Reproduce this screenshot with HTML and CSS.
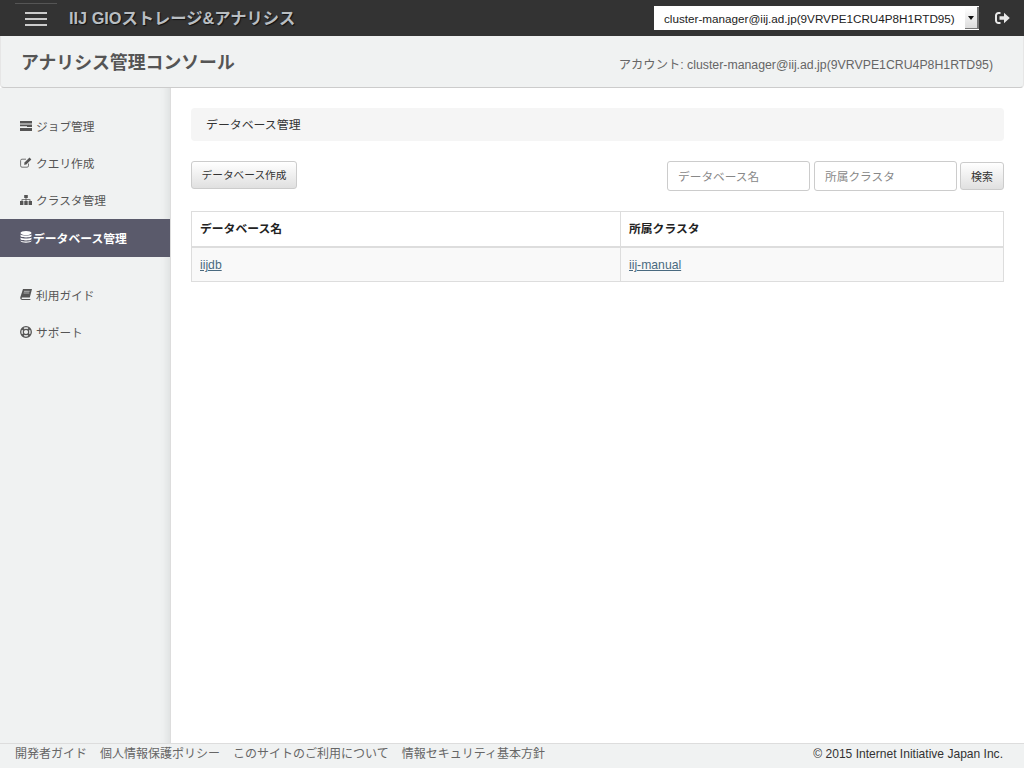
FILE: index.html
```html
<!DOCTYPE html>
<html lang="ja">
<head>
<meta charset="utf-8">
<title>アナリシス管理コンソール</title>
<link rel="stylesheet" href="styles.css">
</head>
<body>
<div class="page">
  <header class="topbar">
    <button class="burger" aria-label="menu"><span></span><span></span><span></span></button>
    <div class="brand">IIJ GIOストレージ&amp;アナリシス</div>
    <div class="topright">
      <div class="select">
        <span class="select-text">cluster-manager@iij.ad.jp(9VRVPE1CRU4P8H1RTD95)</span>
        <span class="select-arrow"><i></i></span>
      </div>
      <svg class="logout" viewBox="0 0 15 12" width="15" height="12"><path d="M5.500 1H3.500A2.500 2.500 0 0 0 1 3.500v5A2.500 2.500 0 0 0 3.500 11h2" fill="none" stroke="#e8e8e8" stroke-width="2"/><path d="M4.500 4.200H9V.8L14.800 6 9 11.200V7.800H4.500z" fill="#e8e8e8"/></svg>
    </div>
  </header>
  <div class="titlebar">
    <h1>アナリシス管理コンソール</h1>
    <div class="account">アカウント: cluster-manager@iij.ad.jp(9VRVPE1CRU4P8H1RTD95)</div>
  </div>
  <div class="body">
    <nav class="side">
      <a class="nav"><svg viewBox="0 0 12 10" width="12" height="10"><path d="M0 0h12v2.600H0zM0 3.500h12v2.600H7v-.8H0zM0 7h12v3H0z" fill="#555"/></svg>ジョブ管理</a>
      <a class="nav"><svg viewBox="0 0 12 11" width="12" height="11"><path d="M8.500 6.500v2.300A1.400 1.400 0 0 1 7.100 10.200H2A1.400 1.400 0 0 1 .6 8.800V3.600A1.400 1.400 0 0 1 2 2.200h4" fill="none" stroke="#666" stroke-width=".9"/><path d="M4.500 5.600 9.500.6l1.800 1.800-5 5-2.200.4z" fill="#555"/></svg>クエリ作成</a>
      <a class="nav"><svg viewBox="0 0 12 10" width="12" height="10"><path d="M4.200 0h3.600v3H6.400v1.300h4v1.800H12V10H8.600V6.100h1V5.100H6.400v1H7.700V10H4.300V6.100h1.300v-1H2.400v1h1V10H0V6.100h1.600V4.300h4V3H4.200z" fill="#555"/></svg>クラスタ管理</a>
      <a class="nav active"><svg viewBox="0 0 12 12" width="12" height="12"><ellipse cx="6" cy="2" rx="5.500" ry="2" fill="#fff"/><path d="M.5 3.400C1.500 4.700 10.500 4.700 11.500 3.400V5.200C10.500 6.800 1.500 6.800.5 5.200zM.5 6.500C1.500 7.800 10.500 7.800 11.500 6.500V8.200C10.500 9.800 1.500 9.800.5 8.200zM.5 9.400C1.500 10.700 10.500 10.700 11.500 9.400V10C10.500 12.300 1.500 12.300.5 10z" fill="#fff"/></svg>データベース管理</a>
      <div class="nav-gap"></div>
      <a class="nav"><svg viewBox="0 0 12 11" width="12" height="11"><path d="M3 0h9L9.800 8.600H2.200C1.400 8.600 1.300 9.900 2.200 9.900h8.300l-.2 1H2C.4 10.900.1 9.300.3 8.300z" fill="#555"/><path d="M4 2.300h5.600M3.600 4h5.600" stroke="#f0f2f2" stroke-width=".6"/></svg>利用ガイド</a>
      <a class="nav"><svg viewBox="0 0 12 12" width="12" height="12"><circle cx="6" cy="6" r="5.300" fill="none" stroke="#555" stroke-width="1.300"/><circle cx="6" cy="6" r="2.700" fill="none" stroke="#555" stroke-width="1.200"/><path d="M2.200 2.200 4.100 4.100M9.800 2.200 7.900 4.100M2.200 9.800 4.100 7.900M9.800 9.800 7.900 7.900" stroke="#555" stroke-width="2.200"/></svg>サポート</a>
    </nav>
    <main class="main">
      <div class="crumb">データベース管理</div>
      <div class="tools">
        <button class="btn">データベース作成</button>
        <div class="search">
          <input class="field" placeholder="データベース名">
          <input class="field" placeholder="所属クラスタ">
          <button class="btn btn-search">検索</button>
        </div>
      </div>
      <table class="grid">
        <thead>
          <tr><th class="col1">データベース名</th><th>所属クラスタ</th></tr>
        </thead>
        <tbody>
          <tr><td><a href="#">iijdb</a></td><td><a href="#">iij-manual</a></td></tr>
        </tbody>
      </table>
    </main>
  </div>
  <footer class="footer">
    <div class="links"><a>開発者ガイド</a><a>個人情報保護ポリシー</a><a>このサイトのご利用について</a><a>情報セキュリティ基本方針</a></div>
    <div class="copy">© 2015 Internet Initiative Japan Inc.</div>
  </footer>
</div>
</body>
</html>
```

FILE: styles.css
```css
* { box-sizing: border-box; }
html, body { margin: 0; height: 100%; }
body {
  font-family: "Liberation Sans", "Noto Sans CJK JP", sans-serif;
  font-size: 12px;
  color: #333;
  background: #fff;
}
.page { height: 768px; display: flex; flex-direction: column; overflow: hidden; }

.topbar {
  height: 36px;
  flex: none;
  background: #333;
  display: flex;
  align-items: center;
  padding-left: 15px;
}
.burger {
  width: 42px;
  height: 33px;
  margin-top: 3px;
  padding: 8px 10px 0;
  border: 0;
  border-top: 1px solid #555;
  background: transparent;
  display: flex;
  flex-direction: column;
  gap: 4px;
}
.burger span { display: block; width: 22px; height: 2px; background: #ccc; flex: none; }
.brand {
  margin-left: 12px;
  margin-bottom: 2px;
  font-size: 16.3px;
  font-weight: bold;
  color: #b9bec2;
  text-shadow: 1px 1px 1px #111;
  white-space: nowrap;
}
.topright { margin-left: auto; display: flex; align-items: center; padding-right: 14px; }
.select {
  width: 325px;
  height: 24px;
  background: #fff;
  display: flex;
  align-items: center;
  justify-content: space-between;
  padding-left: 10px;
  color: #222;
  font-size: 11.7px;
  white-space: nowrap;
}
.select-arrow {
  width: 14px;
  height: 22px;
  background: linear-gradient(#fff, #ddd);
  border-right: 2px solid #777;
  border-bottom: 1px solid #777;
  display: flex;
  align-items: center;
  justify-content: center;
}
.select-arrow i {
  width: 0;
  height: 0;
  border-left: 3px solid transparent;
  border-right: 3px solid transparent;
  border-top: 4px solid #111;
}
.logout { margin-left: 16px; }

.titlebar {
  height: 52px;
  flex: none;
  background: #f0f2f2;
  border: 1px solid #e6e6e6;
  border-bottom: 1px solid #ccc;
  border-top: 0;
  border-radius: 0 0 4px 4px;
  display: flex;
  align-items: center;
  justify-content: space-between;
  padding: 0 30px 0 20px;
  position: relative;
  z-index: 2;
}
.titlebar h1 { margin: 0 0 1px; font-size: 17.85px; font-weight: bold; color: #555; }
.account { color: #666; font-size: 12.3px; margin-top: 5px; }

.body { flex: 1; display: flex; min-height: 0; }
.side {
  width: 171px;
  flex: none;
  background: #f0f2f2;
  padding-top: 20px;
  box-shadow: inset -10px 0 8px -8px #d9dcdc;
  border-right: 1px solid #ddd;
}
.nav {
  height: 37px;
  display: flex;
  align-items: center;
  padding: 0 0 2px 20px;
  gap: 4px;
  color: #555;
  font-size: 11.7px;
  width: 170px;
}
.nav.active {
  height: 38px;
  background: #5a5a6b;
  color: #fff;
  font-weight: bold;
  font-size: 11.8px;
  gap: 1px;
}
.nav svg { flex: none; }
.nav-gap { height: 20px; }

.main { flex: 1; padding: 20px 20px 0; min-width: 0; }
.crumb {
  height: 33px;
  background: #f5f5f5;
  border-radius: 4px;
  padding: 0 0 2px 15px;
  display: flex;
  align-items: center;
  color: #333;
  font-size: 11.9px;
}
.tools {
  height: 31px;
  margin-top: 20px;
  display: flex;
  justify-content: space-between;
  align-items: flex-start;
}
.btn {
  height: 28px;
  padding: 0 9.500px 2px;
  font: inherit;
  font-size: 10.7px;
  color: #333;
  background: linear-gradient(#fff, #e0e0e0);
  border: 1px solid #ccc;
  border-radius: 3px;
}
.search { display: flex; align-items: flex-start; gap: 4px; }
.field {
  width: 143px;
  height: 30px;
  font: inherit;
  font-size: 11.7px;
  padding: 0 10px;
  border: 1px solid #ccc;
  border-radius: 3px;
  background: #fff;
}
.field::placeholder { color: #888; opacity: 1; }
.btn-search { width: 44px; padding: 0 0 1px; margin: 1px 0 0 -1px; font-size: 11px; }
.grid {
  width: 100%;
  margin-top: 19px;
  border-collapse: collapse;
  table-layout: fixed;
  font-size: 11.8px;
}
.grid th, .grid td { border: 1px solid #ddd; padding: 0 8px; text-align: left; }
.grid th { height: 35px; font-weight: bold; color: #222; border-bottom-width: 2px; padding-bottom: 2px; }
.grid td { height: 35px; background: #f9f9f9; font-size: 12.2px; padding-top: 2px; }
.grid a { color: #4a6a80; text-decoration: underline; }
.col1 { width: 429px; }

.footer {
  height: 25px;
  flex: none;
  background: #f0f2f2;
  border-top: 1px solid #ddd;
  display: flex;
  justify-content: space-between;
  align-items: flex-start;
  padding: 2px 21px 0 15px;
  line-height: 16px;
  position: relative;
  z-index: 2;
}
.links { display: flex; gap: 13px; color: #666; font-size: 12px; }
.copy { color: #333; font-size: 12.05px; }
```
